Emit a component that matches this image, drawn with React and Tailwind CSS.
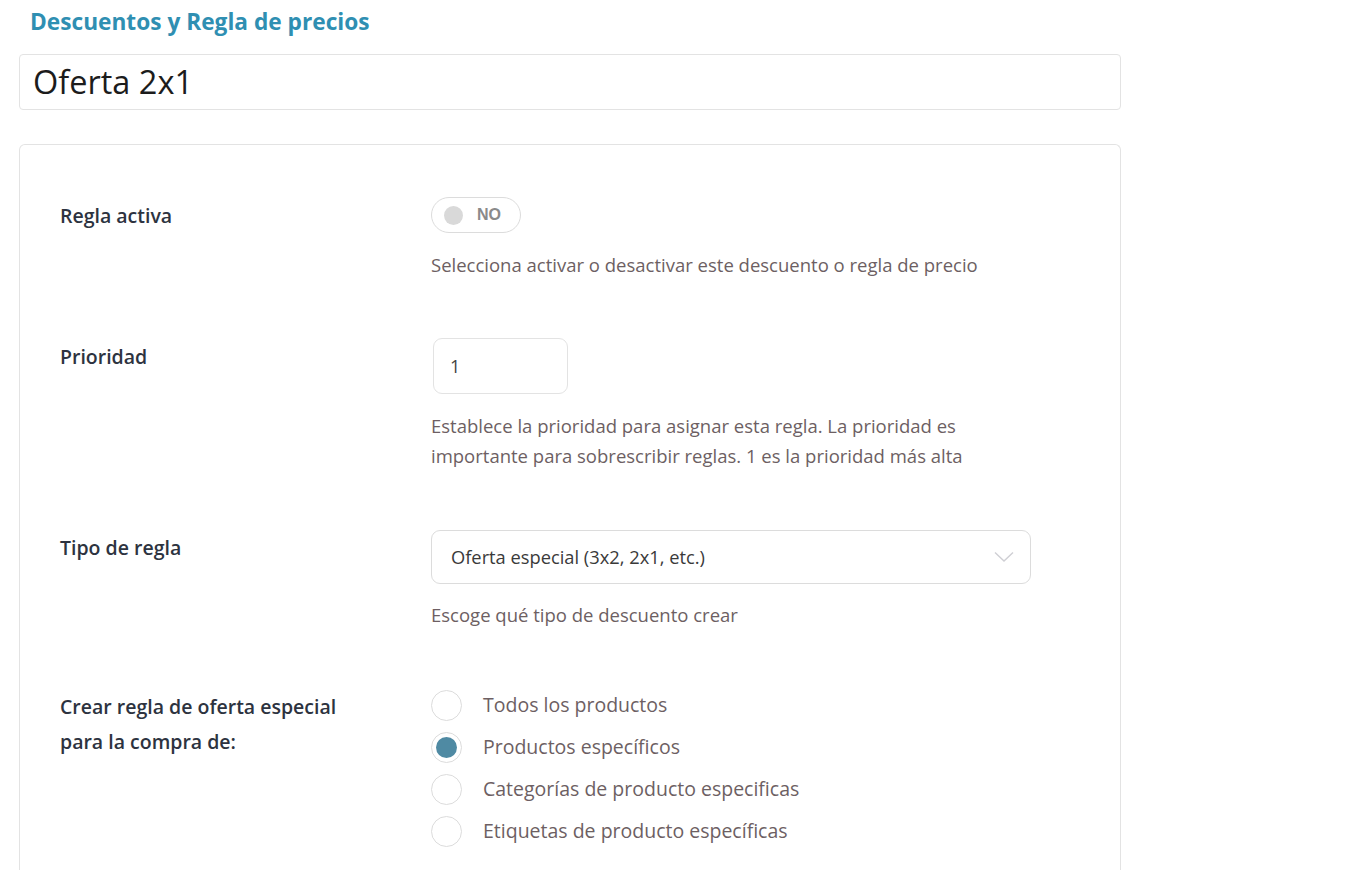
import React, { useState } from "react";

const body = { fontFamily: '"Open Sans", "Noto Sans", Arial, sans-serif' };

const Row = ({ label, children }) => (
  <div className="flex items-start">
    <div className="w-[371px] shrink-0 pr-[40px] pt-[1px] text-[19.5px] leading-[35px] font-semibold text-[#2d3340]">
      {label}
    </div>
    <div className="flex-1">{children}</div>
  </div>
);

const Help = ({ children }) => (
  <p className="text-[18.5px] leading-[30px] text-[#6d5f63]">{children}</p>
);

export default function App() {
  const [target, setTarget] = useState("specific");

  const options = [
    ["all", "Todos los productos"],
    ["specific", "Productos específicos"],
    ["cats", "Categorías de producto especificas"],
    ["tags", "Etiquetas de producto específicas"],
  ];

  return (
    <div className="min-h-screen bg-white pl-[19px] pr-[227px]" style={body}>
      <h1 className="pl-[11px] pt-[7px] text-[22.7px] leading-[30px] font-bold text-[#2f8fb2]">
        Descuentos y Regla de precios
      </h1>

      <div className="mt-[17px] h-[56px] rounded-[4px] border border-[#e3e3e3] flex items-center px-[13px]">
        <span className="text-[32.5px] text-[#1c1c1c]">Oferta 2x1</span>
      </div>

      <div className="mt-[34px] rounded-t-[6px] border border-b-0 border-[#e3e3e3] pl-[40px] pr-[40px] pt-[52px] pb-[40px]">
        <div className="flex flex-col gap-[58px]">
          <Row label="Regla activa">
            <button className="h-[36px] w-[90px] rounded-full border border-[#dcdcdc] flex items-center pl-[12px] gap-[14px]">
              <span className="w-[19px] h-[19px] rounded-full bg-[#d9d9d9]" />
              <span className="text-[16px] font-bold text-[#8a8a8a]" style={{ fontFamily: "Arial, sans-serif" }}>
                NO
              </span>
            </button>
            <div className="mt-[17px]">
              <Help>Selecciona activar o desactivar este descuento o regla de precio</Help>
            </div>
          </Row>

          <Row label="Prioridad">
            <div className="ml-[2px] w-[135px] h-[56px] rounded-[9px] border border-[#e3e3e3] flex items-center px-[16px] text-[18px] text-[#444]">
              1
            </div>
            <div className="mt-[17px] max-w-[600px]">
              <Help>
                Establece la prioridad para asignar esta regla. La prioridad es
                <br />
                importante para sobrescribir reglas. 1 es la prioridad más alta
              </Help>
            </div>
          </Row>

          <Row label="Tipo de regla">
            <div className="mt-[1px] w-[600px] h-[54px] rounded-[9px] border border-[#dcdcdc] flex items-center justify-between pl-[19px] pr-[16px]">
              <span className="text-[18.3px] text-[#3a3a3a]">Oferta especial (3x2, 2x1, etc.)</span>
              <svg width="20" height="12" viewBox="0 0 20 12" fill="none">
                <path d="M1 1.5 L10 10 L19 1.5" stroke="#cfcfd4" strokeWidth="1.4" />
              </svg>
            </div>
            <div className="mt-[16px]">
              <Help>Escoge qué tipo de descuento crear</Help>
            </div>
          </Row>

          <Row
            label={
              <span className="block w-[300px]">
                Crear regla de oferta especial para la compra de:
              </span>
            }
          >
            <div className="flex flex-col -mt-[4px]">
              {options.map(([key, text]) => (
                <label key={key} className="flex items-center h-[42px] cursor-pointer" onClick={() => setTarget(key)}>
                  <span className="w-[31px] h-[31px] rounded-full border border-[#dcdcdc] flex items-center justify-center">
                    {target === key && <span className="w-[21px] h-[21px] rounded-full bg-[#4f8aa3]" />}
                  </span>
                  <span className="ml-[21px] text-[19.5px] text-[#6d5f63]">{text}</span>
                </label>
              ))}
            </div>
          </Row>
        </div>
      </div>
    </div>
  );
}
